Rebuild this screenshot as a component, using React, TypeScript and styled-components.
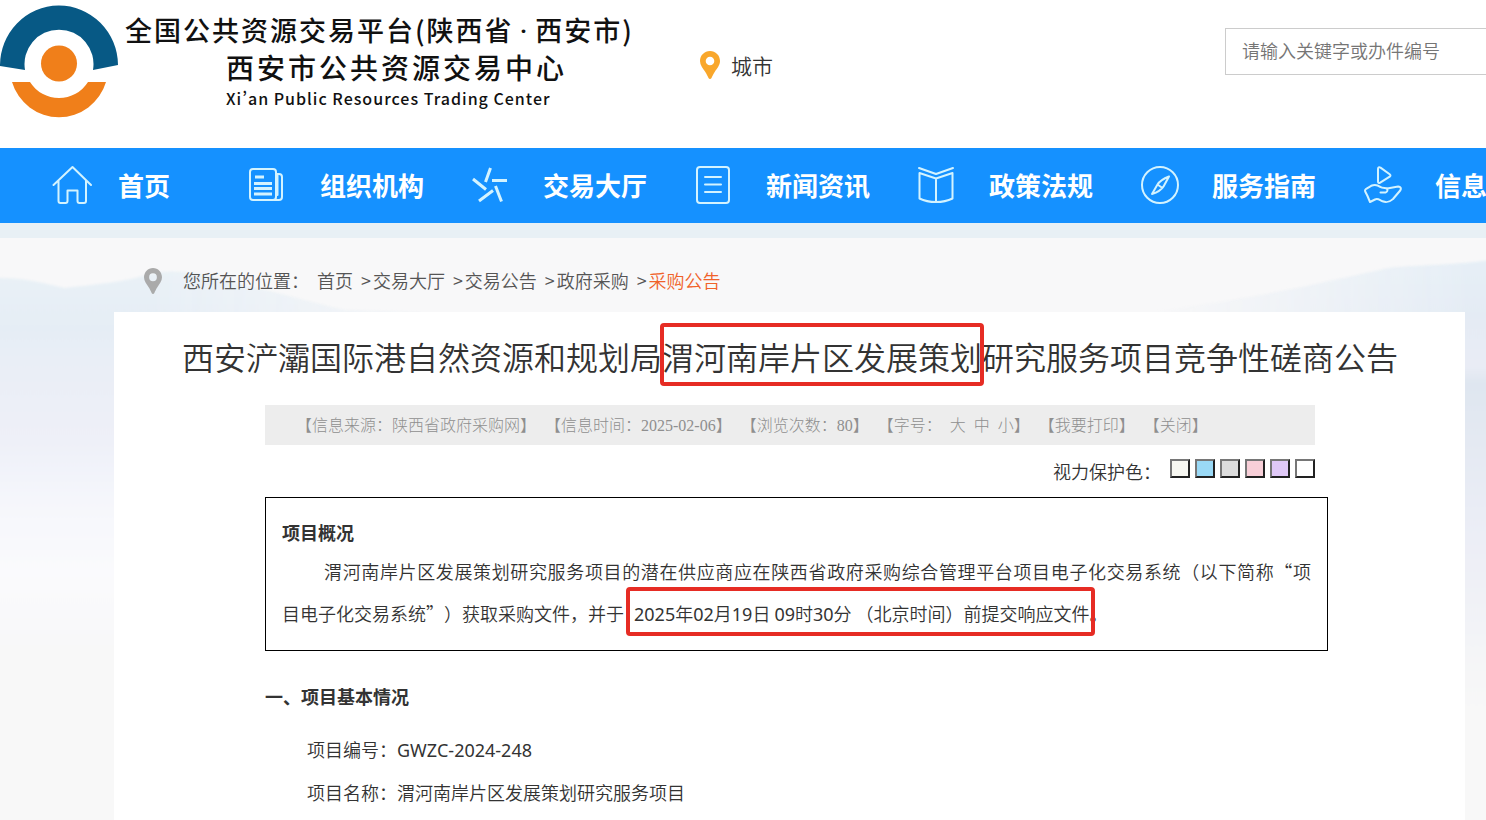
import React from 'react';
import styled, { createGlobalStyle, css } from 'styled-components';

const sans = '"Noto Sans CJK SC", "Noto Sans", sans-serif';

const GlobalStyle = createGlobalStyle`
  *, *::before, *::after { box-sizing: border-box; }
  html, body { margin: 0; }
  body { font-family: ${sans}; font-size: 18px; font-weight: 350; color: #333; background: #fff; overflow-x: hidden; }
  h1, h2, h3, p, ul, ol { margin: 0; padding: 0; }
  ul, ol { list-style: none; }
  a { color: inherit; text-decoration: none; }
  button, input { font-family: inherit; }
`;

const Page = styled.div`
  min-height: 100vh;
  display: flex;
  flex-direction: column;
`;

const Header = styled.header`
  height: 148px;
  display: flex;
  align-items: flex-start;
  overflow: hidden;
`;

const Brand = styled.a`
  display: flex;
  align-items: flex-start;
  color: #111;
  flex: none;
`;

const BrandMark = styled.svg`
  width: 120px;
  height: 124px;
  flex: none;
`;

const BrandText = styled.span`
  display: flex;
  flex-direction: column;
  padding: 12px 0 0 5px;
  font-weight: 500;
`;

const BrandLine = styled.span<{ $size: number; $tracking: number }>`
  font-size: ${(p) => p.$size}px;
  line-height: 35px;
  letter-spacing: ${(p) => p.$tracking}px;
  white-space: nowrap;
`;

const BrandDot = styled.span`
  margin: 0 6px;
  font-family: Roboto, sans-serif;
`;

const BrandCentre = styled.span`
  display: flex;
  flex-direction: column;
  padding-left: 101px;
`;

const BrandLatin = styled.span`
  font-size: 16px;
  line-height: 26px;
  letter-spacing: 1px;
  white-space: nowrap;
  font-feature-settings: "pwid" 1;
`;

const City = styled.button`
  display: flex;
  align-items: center;
  gap: 11px;
  margin: 50px 0 0 66px;
  padding: 0;
  border: 0;
  background: none;
  color: #333;
  font-size: 21px;
  font-weight: 350;
  line-height: 30px;
  flex: none;
`;

const PinSvg = styled.svg<{ $w: number; $h: number }>`
  width: ${(p) => p.$w}px;
  height: ${(p) => p.$h}px;
  flex: none;
`;

const Search = styled.input`
  width: 261px;
  height: 47px;
  margin: 28px 0 0 auto;
  padding: 0 0 3px 16px;
  border: 1px solid #ccc;
  border-right: 0;
  border-radius: 0;
  font-size: 18px;
  font-weight: 350;
  color: #333;
  flex: none;
  &::placeholder { color: #757575; opacity: 1; }
`;

const Nav = styled.nav`
  height: 75px;
  background: #1591ff;
  overflow: hidden;
`;

const NavList = styled.ul`
  display: flex;
  align-items: center;
  height: 100%;
  padding: 0 0 2px 52px;
`;

const NavLink = styled.a<{ $short?: boolean }>`
  display: flex;
  align-items: center;
  gap: ${(p) => (p.$short ? 26 : 33)}px;
  margin-right: ${(p) => (p.$short ? 77 : 46)}px;
  color: #fff;
  font-size: 26px;
  font-weight: 700;
  line-height: 38px;
  white-space: nowrap;
`;

const NavSvg = styled.svg`
  width: 40px;
  height: 40px;
  flex: none;
  fill: none;
  stroke: #d3f3ff;
  stroke-width: 2;
  stroke-linecap: round;
  stroke-linejoin: round;
`;

const Strip = styled.div`
  height: 15px;
  background: #e8f0f5;
`;

const Main = styled.main`
  position: relative;
  isolation: isolate;
  flex: 1;
  display: flex;
  flex-direction: column;
  background: #f8f8f9;
  padding: 0 21px 0 114px;
`;

const Scenery = styled.svg`
  position: absolute;
  z-index: -1;
  top: 0;
  left: 0;
  width: 100%;
  height: 582px;
`;

const Crumbs = styled.nav`
  display: flex;
  align-items: center;
  height: 74px;
  padding: 11px 0 0 30px;
  color: #555;
`;

const CrumbLabel = styled.span`
  margin: 0 8px 0 21px;
  padding-bottom: 2px;
`;

const CrumbList = styled.ol`
  display: flex;
  padding-bottom: 2px;
`;

const Crumb = styled.li`
  &:not(:last-child)::after {
    content: '>';
    margin: 0 2px 0 8px;
  }
  &:last-child { color: #f0622a; }
`;

const Card = styled.article`
  flex: 1;
  background: #fff;
  padding: 22px 150px 4px 151px;
`;

const Title = styled.h1`
  margin: 0 -100px;
  font-size: 32px;
  font-weight: 350;
  line-height: 44px;
  text-align: center;
  white-space: nowrap;
`;

const Marked = styled.span<{ $wide?: boolean }>`
  position: relative;
  display: inline-block;
  text-indent: 0;
  ${(p) => p.$wide && css`margin-left: 6px;`}
  &::after {
    content: '';
    position: absolute;
    border: 4px solid #e62c24;
    border-radius: 4px;
    pointer-events: none;
    ${(p) =>
      p.$wide
        ? css`inset: -5px -5px -1px -8px;`
        : css`inset: -11px -2px -8px -2px;`}
  }
`;

const Meta = styled.div`
  display: flex;
  align-items: center;
  height: 40px;
  margin-top: 27px;
  padding: 0 0 3px 31px;
  background: #ededed;
  color: #8f8f8f;
  font-family: "Liberation Serif", ${sans};
  font-size: 16px;
  font-weight: 300;
  white-space: pre;
`;

const MetaItem = styled.span`
  margin-right: 9px;
`;

const MetaButton = styled.button`
  padding: 0;
  border: 0;
  background: none;
  color: inherit;
  font-size: 16px;
  font-weight: 300;
`;

const SizeButton = styled(MetaButton)`
  margin-left: 8px;
`;

const Tint = styled.div`
  display: flex;
  justify-content: flex-end;
  align-items: center;
  height: 52px;
`;

const TintSet = styled.div`
  display: flex;
  gap: 5px;
  margin: 0 0 6px 9px;
`;

const Swatch = styled.button<{ $colour: string }>`
  width: 20px;
  height: 19px;
  padding: 0;
  border: 2px solid;
  border-color: #767676 #222 #222 #767676;
  background: ${(p) => p.$colour};
`;

const Overview = styled.section`
  margin-right: -13px;
  padding: 16px 16px 15px;
  border: 1px solid #000;
`;

const OverviewHeading = styled.h2`
  font-size: 18px;
  font-weight: 700;
  line-height: 36px;
`;

const Paragraph = styled.p`
  line-height: 42px;
  text-indent: 42px;
  text-align: justify;
  text-spacing-trim: space-all;
`;

const Unbroken = styled.span`
  white-space: nowrap;
`;

const Latin = styled.span`
  font-family: "Noto Sans", sans-serif;
  font-weight: 400;
`;

const SectionHeading = styled.h2`
  margin-top: 24px;
  font-size: 18px;
  font-weight: 700;
  line-height: 42px;
`;

const Facts = styled.ul`
  margin: 11px 0 0 42px;
  line-height: 42px;
`;

const tints = [
  ['米色', '#f7f7f1'],
  ['蓝色', '#9ad9f6'],
  ['灰色', '#dcdcdc'],
  ['粉色', '#f8cfd8'],
  ['紫色', '#e0c9f7'],
  ['白色', '#ffffff'],
];

/** Sets runs of Latin letters and digits in the Latin face. */
function Mixed({ text }: { text: string }) {
  return (
    <>
      {text
        .split(/([0-9A-Za-z-]+)/)
        .map((part, i) => (i % 2 ? <Latin key={i}>{part}</Latin> : part))}
    </>
  );
}

function Pin({ w, h, colour }: { w: number; h: number; colour: string }) {
  return (
    <PinSvg $w={w} $h={h} viewBox="0 0 20 28" preserveAspectRatio="none" aria-hidden="true">
      <path
        fill={colour}
        fillRule="evenodd"
        d="M10 0C4.400 0 0 4.400 0 10c0 4 3 7.500 5 10.500 1.600 2.400 2.600 4.500 3.500 6.500.6 1.300 2.400 1.300 3 0 .9-2 1.900-4.100 3.500-6.500 2-3 5-6.500 5-10.500C20 4.400 15.600 0 10 0Zm0 5.700a4.300 4.300 0 1 1 0 8.600 4.300 4.300 0 0 1 0-8.600Z"
      />
    </PinSvg>
  );
}

const navItems: { label: string; icon: React.ReactNode }[] = [
  {
    label: '首页',
    icon: <path d="M1.500 20 20.500 2 39 20M6.500 16v20a2 2 0 0 0 2 2h5a2 2 0 0 0 2-2V25.500h10V36a2 2 0 0 0 2 2h4.500a2 2 0 0 0 2-2V16" />,
  },
  {
    label: '组织机构',
    icon: (
      <>
        <rect x="3" y="4" width="26" height="31" rx="3" />
        <path d="M29 9h3a3 3 0 0 1 3 3v20a3 3 0 0 1-3 3H27M30.500 10v20" />
        <path strokeWidth="3" strokeLinecap="butt" d="M8 12h9M7 18.500h18M7 23.500h18M7 29h18" />
      </>
    ),
  },
  {
    label: '交易大厅',
    icon: (
      <path
        strokeWidth="3"
        strokeLinecap="butt"
        d="M20.500 3 15.500 17M3 14 16 24.500M9 36l14-10.500M25.500 21l6 15.500M22 15.500h15"
      />
    ),
  },
  {
    label: '新闻资讯',
    icon: (
      <>
        <rect x="4" y="2" width="32" height="36" rx="3" />
        <path d="M12 12h16M12 19.500h16M12 27h16" />
      </>
    ),
  },
  {
    label: '政策法规',
    icon: (
      <>
        <path d="M3 3l17 6 17-6" />
        <path d="M20 13.500 3.500 8v25.500c5 2.500 11 3.500 16.500 3.500s11.500-1 16.500-3.500V8L20 13.500ZM20 13.500V37" />
      </>
    ),
  },
  {
    label: '服务指南',
    icon: (
      <>
        <circle cx="21" cy="20" r="18" />
        <path d="M30 11.500c-5 2-9 4-11.500 8L13 29c5-1.500 9-3.500 11.500-7.500L30 11.500ZM18.500 19.500l5 3.500" />
      </>
    ),
  },
  {
    label: '信息公开',
    icon: (
      <>
        <path d="M16 4v12.500c0 1.500 1 2 2.200 1.200l9.500-6c1-.8 1-1.700 0-2.400L18.500 2.600C17 1.800 16 2.500 16 4Z" />
        <path d="M8 37 5.500 31 3.200 26.500c-.5-1.300 0-2 1-2.700l5-3c3.500-1.300 6.300-.8 9 1 2.500 1.600 5 .8 7 1.700l11-2c2.500 0 3.300 2 2 4L31 34c-4 3.500-6.500 3.800-10.500 2.300-3-1.200-4.500-3.300-7.500-1.800L8 37Z" />
        <path d="M25 23.500c1 1.800.3 3.500-1.500 4h-5" />
      </>
    ),
  },
];

export default function App() {
  return (
    <Page lang="zh-CN">
      <GlobalStyle />
      <Header>
        <Brand href="#">
          <BrandMark viewBox="0 0 120 124" aria-hidden="true">
            <path fill="#075985" d="M0 66A59 60 0 0 1 118 65L93 70A34.500 34.500 0 1 0 25 70Z" />
            <path fill="#f07f1a" d="M12 82h18a34.300 34.300 0 0 0 58 0h18A49 49 0 0 1 12 82Z" />
            <circle cx="59" cy="63.500" r="18" fill="#f07f1a" />
          </BrandMark>
          <BrandText>
            <BrandLine $size={27} $tracking={2}>
              全国公共资源交易平台(陕西省<BrandDot>·</BrandDot>西安市)
            </BrandLine>
            <BrandCentre>
              <BrandLine $size={28} $tracking={3}>西安市公共资源交易中心</BrandLine>
              <BrandLatin>Xi’an Public Resources Trading Center</BrandLatin>
            </BrandCentre>
          </BrandText>
        </Brand>
        <City type="button">
          <Pin w={20} h={28} colour="#f9a72b" />
          城市
        </City>
        <Search type="search" aria-label="搜索" placeholder="请输入关键字或办件编号" />
      </Header>

      <Nav aria-label="主导航">
        <NavList>
          {navItems.map((item, i) => (
            <li key={item.label}>
              <NavLink href="#" $short={i === 0}>
                <NavSvg viewBox="0 0 40 40" aria-hidden="true">
                  {item.icon}
                </NavSvg>
                {item.label}
              </NavLink>
            </li>
          ))}
        </NavList>
      </Nav>
      <Strip />

      <Main>
        <Scenery viewBox="0 0 1486 582" preserveAspectRatio="none" aria-hidden="true">
          <defs>
            <linearGradient id="west" gradientUnits="userSpaceOnUse" x1="0" y1="36" x2="0" y2="582">
              <stop offset="0" stopColor="#e9f1f6" />
              <stop offset="0.1" stopColor="#e5edf5" />
              <stop offset="0.16" stopColor="#e9eef6" />
              <stop offset="0.3" stopColor="#eef0f8" />
              <stop offset="0.45" stopColor="#f7f8fc" />
              <stop offset="0.55" stopColor="#fafafd" />
              <stop offset="0.7" stopColor="#f8f8f8" />
            </linearGradient>
            <linearGradient id="east" gradientUnits="userSpaceOnUse" x1="0" y1="22" x2="0" y2="582">
              <stop offset="0" stopColor="#e6eff6" />
              <stop offset="0.1" stopColor="#e4ebf4" />
              <stop offset="0.19" stopColor="#e9ecf5" />
              <stop offset="0.22" stopColor="#dfe6f0" />
              <stop offset="0.5" stopColor="#eceef6" />
              <stop offset="0.8" stopColor="#f8f8f8" />
            </linearGradient>
            <linearGradient id="haze" gradientUnits="userSpaceOnUse" x1="1150" y1="0" x2="1470" y2="0">
              <stop offset="0" stopColor="#fff" stopOpacity="0" />
              <stop offset="1" stopColor="#fff" />
            </linearGradient>
            <linearGradient id="hazeWest" gradientUnits="userSpaceOnUse" x1="150" y1="0" x2="420" y2="0">
              <stop offset="0" stopColor="#fff" />
              <stop offset="1" stopColor="#fff" stopOpacity="0.2" />
            </linearGradient>
            <mask id="fadeEast">
              <rect x="1100" width="386" height="582" fill="url(#haze)" />
            </mask>
            <mask id="fadeWest">
              <rect width="460" height="582" fill="url(#hazeWest)" />
            </mask>
            <filter id="soft" x="-5%" y="-5%" width="110%" height="110%">
              <feGaussianBlur stdDeviation="1" />
            </filter>
          </defs>
          <g mask="url(#fadeWest)">
            <path filter="url(#soft)" fill="url(#west)" d="M-20 40C25 38 45 46 65 50 90 47 125 44 150 36 175 30 205 36 230 44 270 52 300 62 345 72L420 74V602H-20Z" />
          </g>
          <g mask="url(#fadeEast)">
            <path filter="url(#soft)" fill="url(#east)" d="M1150 74C1250 62 1320 45 1380 32 1400 26 1440 30 1506 20V602H1150Z" />
          </g>
        </Scenery>
        <Crumbs aria-label="当前位置">
          <Pin w={18} h={26} colour="#aaa" />
          <CrumbLabel>您所在的位置：</CrumbLabel>
          <CrumbList>
            {['首页', '交易大厅', '交易公告', '政府采购', '采购公告'].map((c) => (
              <Crumb key={c}>
                <a href="#">{c}</a>
              </Crumb>
            ))}
          </CrumbList>
        </Crumbs>

        <Card>
          <Title>
            西安浐灞国际港自然资源和规划局<Marked>渭河南岸片区发展策划</Marked>研究服务项目竞争性磋商公告
          </Title>
          <Meta>
            <MetaItem>【信息来源：陕西省政府采购网】</MetaItem>
            <MetaItem>【信息时间：2025-02-06】</MetaItem>
            <MetaItem>【浏览次数：80】</MetaItem>
            <MetaItem>
              【字号：
              <SizeButton type="button">大</SizeButton>
              <SizeButton type="button">中</SizeButton>
              <SizeButton type="button">小</SizeButton>】
            </MetaItem>
            <MetaItem>
              【<MetaButton type="button">我要打印</MetaButton>】
            </MetaItem>
            <MetaItem>
              【<MetaButton type="button">关闭</MetaButton>】
            </MetaItem>
          </Meta>
          <Tint>
            <span>视力保护色：</span>
            <TintSet>
              {tints.map(([name, colour]) => (
                <Swatch key={name} type="button" aria-label={name} $colour={colour} />
              ))}
            </TintSet>
          </Tint>

          <Overview>
            <OverviewHeading>项目概况</OverviewHeading>
            <Paragraph>
              渭河南岸片区发展策划研究服务项目的潜在供应商应在陕西省政府采购综合管理平台项目电子化交易系统（以下简称“项<Unbroken>目电子化交易系统”</Unbroken>）获取采购文件，并于{' '}
              <Marked $wide>
                <Mixed text="2025年02月19日 09时30分 （北京时间）前提交响应文件" />
              </Marked>。
            </Paragraph>
          </Overview>

          <SectionHeading>一、项目基本情况</SectionHeading>
          <Facts>
            <li><Mixed text="项目编号：GWZC-2024-248" /></li>
            <li>项目名称：渭河南岸片区发展策划研究服务项目</li>
          </Facts>
        </Card>
      </Main>
    </Page>
  );
}
